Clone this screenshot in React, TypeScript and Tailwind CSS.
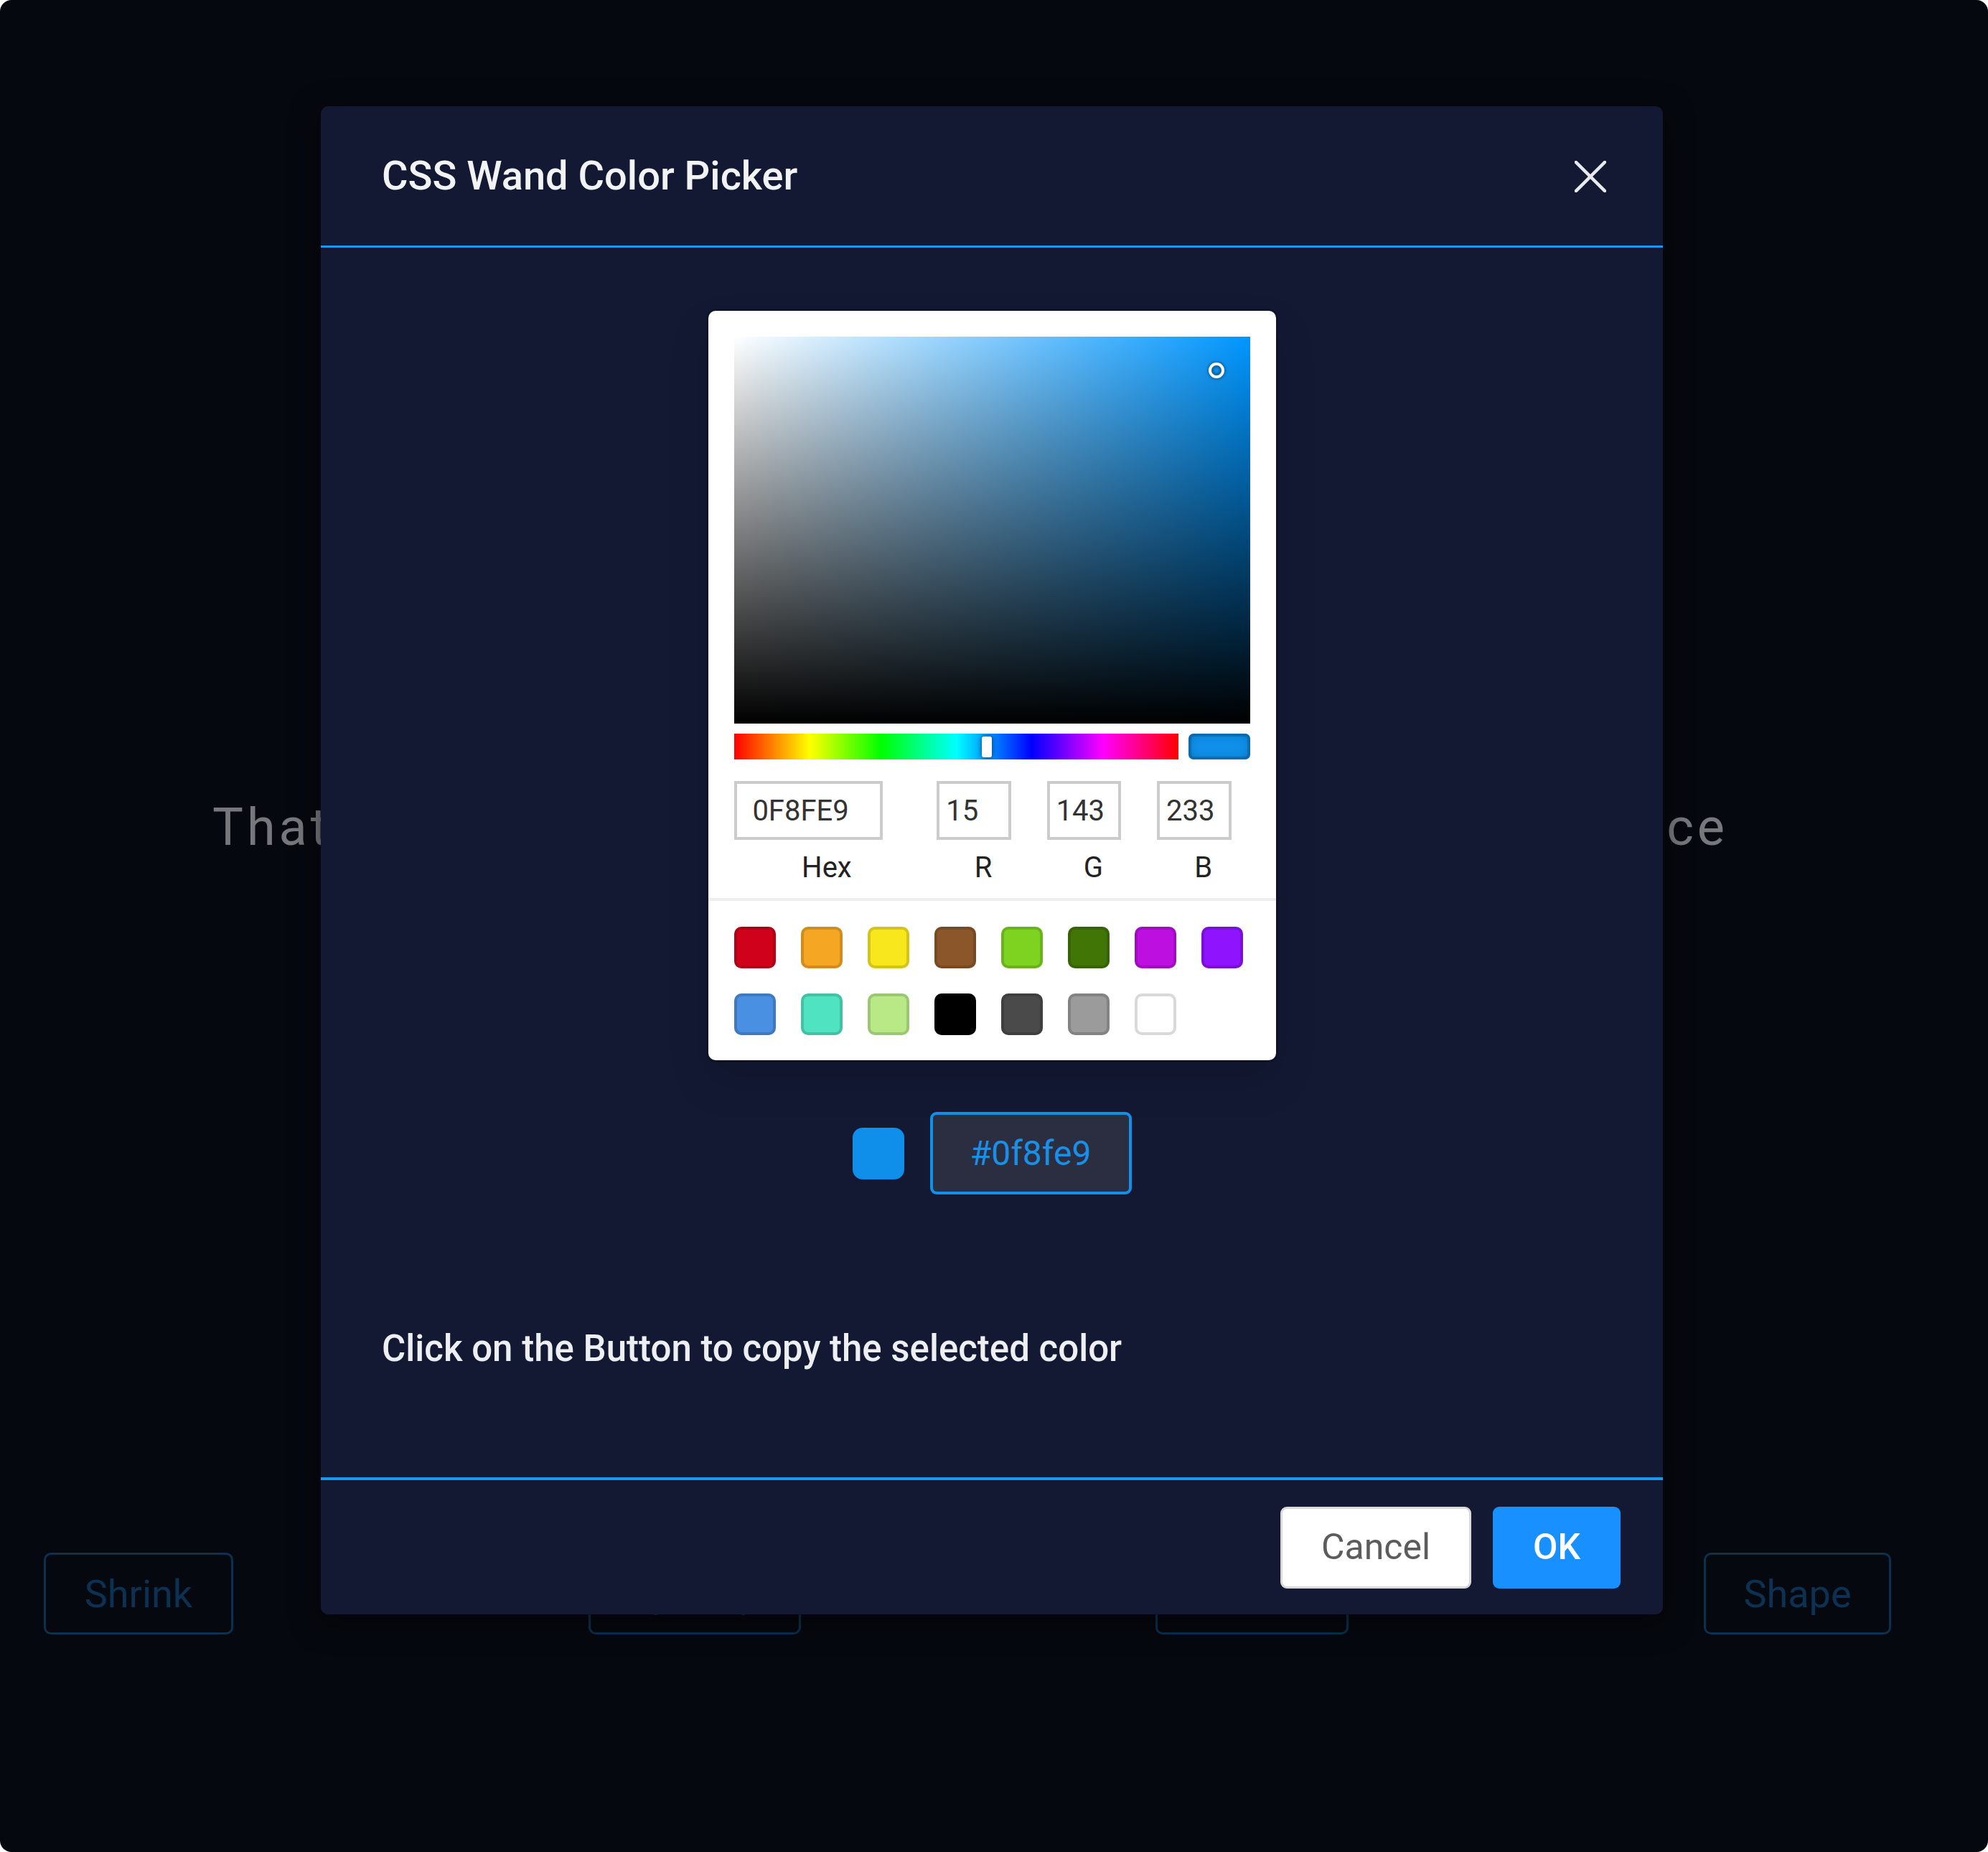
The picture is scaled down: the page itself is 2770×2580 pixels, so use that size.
import React from "react";

const FONT = { fontFamily: "Roboto, 'Noto Sans', 'Liberation Sans', sans-serif" };

const presets = [
  "#D0021B",
  "#F5A623",
  "#F8E71C",
  "#8B572A",
  "#7ED321",
  "#417505",
  "#BD10E0",
  "#9013FE",
  "#4A90E2",
  "#50E3C2",
  "#B8E986",
  "#000000",
  "#4A4A4A",
  "#9B9B9B",
  "#FFFFFF",
];

function Field({ value, label, double }: { value: string; label: string; double?: boolean }) {
  return (
    <div className={double ? "flex-[2] min-w-0" : "flex-1 min-w-0 pl-[24px]"}>
      <input
        readOnly
        value={value}
        className="block w-[80%] h-[82px] px-[10%] text-[40px] leading-[60px] text-[#333] bg-white outline-none shadow-[inset_0_0_0_4px_#cccccc]"
      />
      <div className="pt-[9px] pb-[12px] text-center text-[40px] leading-[60px] text-[#222]">{label}</div>
    </div>
  );
}

function SketchPicker() {
  return (
    <div className="w-[791px] bg-white rounded-[10px] px-[36px] pt-[36px] shadow-[0_0_0_3px_rgba(0,0,0,0.15),0_28px_56px_rgba(0,0,0,0.15)]">
      {/* saturation */}
      <div className="relative w-full h-[539px] overflow-hidden bg-[#0096ff]">
        <div className="absolute inset-0 bg-[linear-gradient(to_right,#fff,rgba(255,255,255,0))]" />
        <div className="absolute inset-0 bg-[linear-gradient(to_top,#000,rgba(0,0,0,0))]" />
        <div className="absolute left-[93.56%] top-[8.63%] -translate-x-[7px] -translate-y-[7px] w-[14px] h-[14px] rounded-full shadow-[0_0_0_4px_#fff,inset_0_0_3px_3px_rgba(0,0,0,0.3),0_0_3px_6px_rgba(0,0,0,0.25)]" />
      </div>
      {/* controls */}
      <div className="flex">
        <div className="flex-1 py-[14px]">
          <div className="relative h-[36px] overflow-hidden bg-[linear-gradient(to_right,#f00_0%,#ff0_17%,#0f0_33%,#0ff_50%,#00f_67%,#f0f_83%,#f00_100%)]">
            <div className="absolute left-[56.9%] -translate-x-[7px] top-[4px] w-[14px] h-[29px] rounded-[3px] bg-white shadow-[0_0_7px_rgba(0,0,0,0.6)]" />
          </div>
        </div>
        <div className="mt-[14px] ml-[14px] w-[86px] h-[36px] rounded-[7px] bg-[#0f8fe9] shadow-[inset_0_0_0_4px_rgba(0,0,0,0.15),inset_0_0_14px_rgba(0,0,0,0.25)]" />
      </div>
      {/* fields */}
      <div className="flex pt-[16px]">
        <Field value="0F8FE9" label="Hex" double />
        <Field value="15" label="R" />
        <Field value="143" label="G" />
        <Field value="233" label="B" />
      </div>
      {/* swatches */}
      <div className="-mx-[36px] px-[36px] pt-[36px] pb-[35px] border-t-[4px] border-[#eeeeee]">
        <div className="grid grid-cols-[repeat(8,58px)] gap-x-[35px] gap-y-[35px]">
          {presets.map((c) => (
            <div
              key={c}
              className="w-[58px] h-[58px] rounded-[10px] shadow-[inset_0_0_0_4px_rgba(0,0,0,0.15)]"
              style={{ backgroundColor: c }}
            />
          ))}
        </div>
      </div>
    </div>
  );
}

function BgButton({ children, w }: { children: React.ReactNode; w: string }) {
  return (
    <div
      className={`${w} h-[114px] rounded-[10px] border-[3px] border-[#0b3050] flex items-center justify-center text-[54px] text-[#0c3152]`}
    >
      {children}
    </div>
  );
}

export default function App() {
  return (
    <div className="w-[2770px] h-[2580px] bg-white" style={FONT}>
      <div className="relative w-[2770px] h-[2580px] rounded-[16px] bg-[#06080f] overflow-hidden flex flex-col">
        {/* background heading */}
        <div className="mt-[1117px] flex justify-between pl-[296px] pr-[362px] text-[72px] leading-[72px] tracking-[5px] text-[#76787d]">
          <span>That is the magic of</span>
          <span>workspace</span>
        </div>
        {/* background buttons */}
        <div className="mt-[974px] flex justify-between pl-[61px] pr-[135px]">
          <BgButton w="w-[264px]">Shrink</BgButton>
          <BgButton w="w-[296px]">Spin Up</BgButton>
          <BgButton w="w-[269px]">Rotate</BgButton>
          <BgButton w="w-[261px]">Shape</BgButton>
        </div>

        {/* modal */}
        <div className="absolute left-[447px] top-[148px] w-[1870px] rounded-[10px] bg-[#131933] flex flex-col shadow-[0_10px_40px_rgba(0,0,0,0.5)]">
          <div className="h-[197px] border-b-[3px] border-[#1a98f0] flex items-center justify-between pl-[85px] pr-[79px]">
            <div className="text-[56px] font-medium text-[#f2f3f5]">CSS Wand Color Picker</div>
            <svg width="44" height="44" viewBox="0 0 44 44" className="mt-[2px]">
              <line x1="2" y1="2" x2="42" y2="42" stroke="#e8eaef" strokeWidth="4.5" strokeLinecap="square" />
              <line x1="42" y1="2" x2="2" y2="42" stroke="#e8eaef" strokeWidth="4.5" strokeLinecap="square" />
            </svg>
          </div>

          <div className="h-[1713px] flex flex-col pt-[88px]">
            <div className="self-center">
              <SketchPicker />
            </div>
            <div className="self-center mt-[72px] flex items-center gap-[36px]">
              <div className="w-[72px] h-[72px] rounded-[14px] bg-[#0f8fe9]" />
              <div className="w-[281px] h-[115px] rounded-[9px] border-[4px] border-[#1190e9] bg-[#2a2e40] flex items-center justify-center text-[48px] text-[#1a8fe6]">
                #0f8fe9
              </div>
            </div>
            <div className="mt-[176px] pl-[85px] text-[51px] leading-[77px] font-medium text-[#eeeff2]">
              Click on the Button to copy the selected color
            </div>
          </div>

          <div className="h-[191px] border-t-[4px] border-[#1a98f0] flex items-center justify-end gap-[30px] pr-[59px]">
            <div className="w-[266px] h-[114px] rounded-[9px] border-[3px] border-[#d9d9d9] bg-white flex items-center justify-center text-[50px] text-[#5c5c5c]">
              Cancel
            </div>
            <div className="w-[178px] h-[114px] rounded-[9px] bg-[#1890ff] flex items-center justify-center text-[50px] font-medium text-white">
              OK
            </div>
          </div>
        </div>
      </div>
    </div>
  );
}
